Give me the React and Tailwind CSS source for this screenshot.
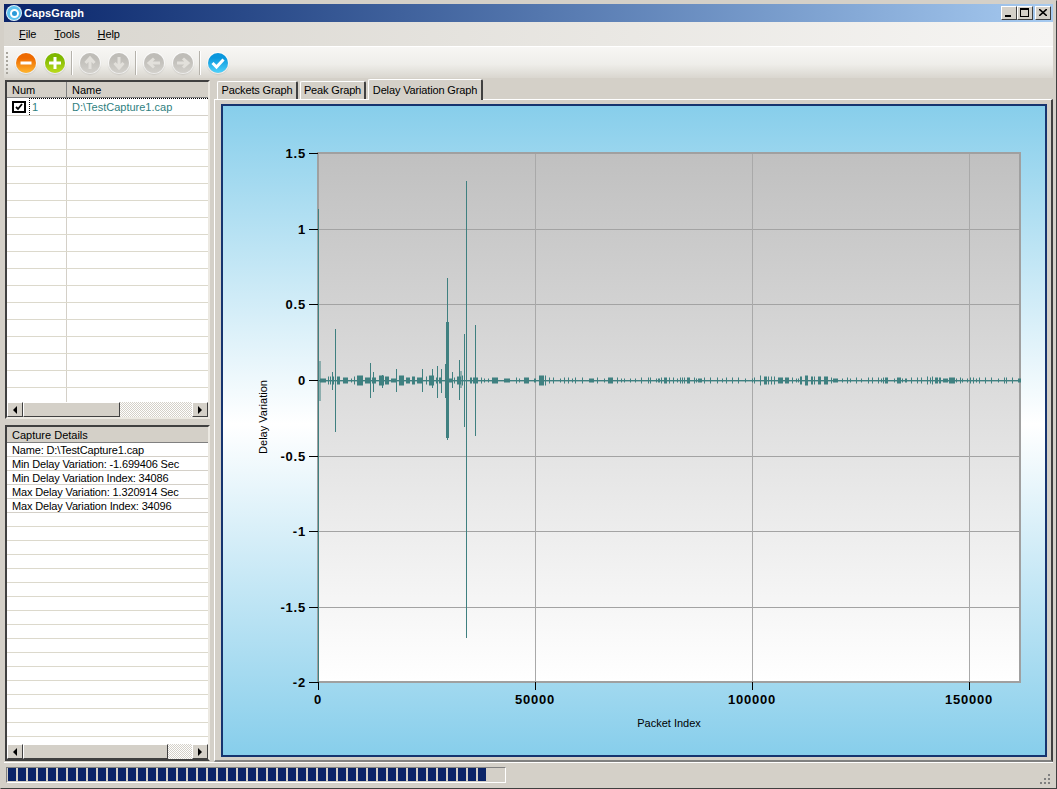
import { Fragment } from "react";

const font = "font-['Liberation_Sans',Arial,sans-serif]";

const yTicks = [
  ["1.5", 153],
  ["1", 229],
  ["0.5", 304],
  ["0", 380],
  ["-0.5", 456],
  ["-1", 531],
  ["-1.5", 607],
  ["-2", 682],
];
const xTicks = [
  ["0", 318],
  ["50000", 535],
  ["100000", 752],
  ["150000", 969],
];

// [x, top, bottom, width]
const spikes = [
  [320, 361, 401, 1],
  [318.5, 209, 682, 1],
  [332.5, 372, 390, 1],
  [335.5, 329, 432, 1],
  [370.5, 363, 398, 1],
  [373.5, 372, 392, 1],
  [382.5, 375, 388, 1],
  [396.5, 369, 392, 1],
  [422.5, 369, 392, 1],
  [432.5, 369, 388, 1],
  [437.5, 366, 398, 1],
  [441.5, 369, 393, 1],
  [445.5, 364, 398, 1],
  [447.5, 322, 438, 3],
  [447.5, 278, 440, 1],
  [452.5, 372, 388, 1],
  [459.5, 360, 400, 1],
  [461, 371, 388, 1],
  [464.5, 334, 427, 1],
  [466.5, 181, 638, 1],
  [475.5, 325, 436, 1],
];

// seeded so the noise stays put between runs
function noise() {
  let seed = 7;
  const rnd = () => {
    seed = (seed * 16807) % 2147483647;
    return seed / 2147483647;
  };
  const out = [];
  let x = 320;
  while (x < 1020) {
    const busy =
      (x > 320 && x < 480) || (x > 755 && x < 830) || (x > 530 && x < 546) || (x > 925 && x < 945);
    const w = rnd() < (busy ? 0.6 : 0.2) ? 2 + Math.floor(rnd() * 5) : 1;
    const h = busy ? 2 + Math.round(rnd() * 3) : 2 + Math.round(rnd());
    out.push([x, w, h]);
    x += w + 1 + Math.floor(rnd() * (busy ? 3 : 6));
  }
  return out;
}

function Chart() {
  return (
    <svg width="822" height="649" viewBox="223 106 822 649" className="block">
      <defs>
        <linearGradient id="panel" x1="0" y1="0" x2="0" y2="1">
          <stop offset="0" stopColor="#87ceeb" />
          <stop offset="0.49" stopColor="#ffffff" />
          <stop offset="1" stopColor="#87ceeb" />
        </linearGradient>
        <linearGradient id="plot" x1="0" y1="0" x2="0" y2="1">
          <stop offset="0" stopColor="#c0c0c0" />
          <stop offset="1" stopColor="#ffffff" />
        </linearGradient>
      </defs>
      <rect x="223" y="106" width="822" height="649" fill="url(#panel)" />
      <rect x="318" y="153" width="702" height="529" fill="url(#plot)" />
      {yTicks.slice(1, 7).map(([label, y]) => (
        <line key={label} x1="318" x2="1020" y1={y + 0.5} y2={y + 0.5} stroke="#a3a3a3" />
      ))}
      {xTicks.slice(1).map(([label, x]) => (
        <line key={label} x1={x + 0.5} x2={x + 0.5} y1="153" y2="682" stroke="#a9a9a9" />
      ))}
      <rect x="318" y="153" width="702" height="529" fill="none" stroke="#a0a0a0" strokeWidth="2" />
      {noise().map(([x, w, h], i) => (
        <rect key={i} x={x} y={380 - h + 0.5} width={w} height={h * 2} fill="#3f8080" />
      ))}
      <rect x="318" y="380" width="702" height="1.4" fill="#3f8080" />
      {spikes.map(([x, a, b, w], i) => (
        <line key={i} x1={x} x2={x} y1={a} y2={b} stroke="#3f8080" strokeWidth={w} />
      ))}
      {yTicks.map(([label, y]) => (
        <Fragment key={label}>
          <line x1="309" x2="318" y1={y + 0.5} y2={y + 0.5} stroke="#000" />
          <text
            x="306"
            y={y + 5}
            textAnchor="end"
            fontSize="13"
            fontWeight="700"
            letterSpacing="0.8"
            fill="#000"
            fontFamily="Liberation Sans"
          >
            {label}
          </text>
        </Fragment>
      ))}
      {xTicks.map(([label, x]) => (
        <Fragment key={label}>
          <line x1={x + 0.5} x2={x + 0.5} y1="682" y2="690" stroke="#000" />
          <text
            x={x}
            y="704"
            textAnchor="middle"
            fontSize="13"
            fontWeight="700"
            letterSpacing="0.8"
            fill="#000"
            fontFamily="Liberation Sans"
          >
            {label}
          </text>
        </Fragment>
      ))}
      <text x="669" y="727" textAnchor="middle" fontSize="11" fill="#000" fontFamily="Liberation Sans">
        Packet Index
      </text>
      <text
        x="267"
        y="417"
        textAnchor="middle"
        fontSize="11"
        fill="#000"
        fontFamily="Liberation Sans"
        transform="rotate(-90 267 417)"
      >
        Delay Variation
      </text>
    </svg>
  );
}

function ToolIcon({ from, to, disabled, kind }) {
  const shapes = {
    minus: <path d="M4.5 10h11" />,
    plus: <path d="M10 4v12M4 10h12" />,
    up: <path d="M10 16V6M5.5 10 10 5l4.5 5" />,
    down: <path d="M10 4v10M5.5 10l4.5 5 4.5-5" />,
    left: <path d="M16 10H6M10 5.5 5 10l5 4.5" />,
    right: <path d="M4 10h10M10 5.5l5 4.5-5 4.5" />,
    check: <path d="M4.5 10 8.5 14 15.5 6.5" />,
  };
  return (
    <span className="flex w-[29px] justify-center">
      <span
        className="flex h-[20px] w-[20px] items-center justify-center rounded-full shadow-[0_0_0_1px_rgba(255,255,255,0.75),0_1px_2px_rgba(0,0,0,0.3)]"
        style={{ background: `linear-gradient(${from} 25%, ${to})` }}
      >
        <svg
          width="20"
          height="20"
          viewBox="0 0 20 20"
          fill="none"
          stroke={disabled ? "#e2e0db" : "#fff"}
          strokeWidth="3"
        >
          {shapes[kind]}
        </svg>
      </span>
    </span>
  );
}

function Sep() {
  return <span className="mx-[2px] h-[24px] w-[2px] border-r border-white bg-[#b5b2ab]" />;
}

function Btn({ children }) {
  return (
    <div className="flex h-[15px] w-[16px] shrink-0 items-center justify-center border border-t-white border-l-white border-r-[#404040] border-b-[#404040] bg-[#d4d0c8]">
      {children}
    </div>
  );
}

function Scrollbar({ thumb }) {
  return (
    <div className="flex h-[15px] shrink-0 bg-[repeating-conic-gradient(#d4d0c8_0_25%,#ffffff_0_50%)] bg-[length:2px_2px]">
      <Btn>
        <span className="border-y-[4px] border-r-[4px] border-y-transparent border-r-black" />
      </Btn>
      <div
        className="h-[15px] border border-t-white border-l-white border-r-[#404040] border-b-[#404040] bg-[#d4d0c8]"
        style={{ width: thumb }}
      />
      <div className="flex-1" />
      <Btn>
        <span className="border-y-[4px] border-l-[4px] border-y-transparent border-l-black" />
      </Btn>
    </div>
  );
}

function WinBtn({ children, className = "" }) {
  return (
    <div
      className={`relative h-[14px] w-[16px] border border-t-white border-l-white border-r-[#404040] border-b-[#404040] bg-[#d4d0c8] ${className}`}
    >
      {children}
    </div>
  );
}

function HeadCell({ children, className = "" }) {
  return (
    <div
      className={`flex h-[16px] items-center border-r border-r-[#808080] border-b border-b-[#808080] pl-[5px] pt-[1px] text-[11px] leading-none text-black ${className}`}
    >
      {children}
    </div>
  );
}

function Tab({ children, className = "" }) {
  return (
    <div
      className={`flex shrink-0 items-center justify-center rounded-t-[2px] border-t border-l border-t-white border-l-white border-r-2 border-r-[#404040] text-[11px] tracking-[-0.15px] text-black ${className}`}
    >
      {children}
    </div>
  );
}

const details = [
  "Name: D:\\TestCapture1.cap",
  "Min Delay Variation: -1.699406 Sec",
  "Min Delay Variation Index: 34086",
  "Max Delay Variation: 1.320914 Sec",
  "Max Delay Variation Index: 34096",
];

export default function App() {
  const topRows = Array.from({ length: 18 });
  const detailRows = Array.from({ length: 21 });
  const blocks = Array.from({ length: 48 });

  return (
    <div
      className={`flex h-[789px] w-[1057px] flex-col overflow-hidden border border-[#404040] border-t-[#d4d0c8] border-l-[#d4d0c8] bg-[#d4d0c8] px-[3px] pt-[3px] pb-[2px] ${font}`}
    >
      {/* title bar */}
      <div className="flex h-[18px] shrink-0 items-center bg-gradient-to-r from-[#0a246a] to-[#a6caf0] pr-[2px] pl-[3px]">
        <span className="flex h-[14px] w-[14px] items-center justify-center rounded-full bg-[#5fc3ee] ring-1 ring-[#dff4fc]">
          <span className="h-[9px] w-[9px] rounded-full border-2 border-white bg-[#2a9ad8]" />
        </span>
        <span className="ml-[3px] text-[11px] font-bold tracking-[0.1px] text-white">CapsGraph</span>
        <div className="ml-auto flex">
          <WinBtn>
            <span className="absolute bottom-[2px] left-[3px] h-[2px] w-[6px] bg-black" />
          </WinBtn>
          <WinBtn>
            <span className="absolute top-[1px] left-[2px] h-[9px] w-[9px] border border-t-2 border-black" />
          </WinBtn>
          <WinBtn className="ml-[2px]">
            <svg className="absolute top-[2px] left-[3px]" width="8" height="7" viewBox="0 0 8 7" stroke="#000" strokeWidth="1.6">
              <path d="M0 0l8 7M8 0 0 7" />
            </svg>
          </WinBtn>
        </div>
      </div>

      {/* menu */}
      <div className="flex h-[24px] shrink-0 items-center gap-[18px] bg-gradient-to-r from-[#d8d5ce] to-[#f6f5f3] pl-[15px] text-[11px] tracking-[-0.1px] text-black">
        <span><u>F</u>ile</span>
        <span><u>T</u>ools</span>
        <span><u>H</u>elp</span>
      </div>

      {/* toolbar */}
      <div className="flex h-[32px] shrink-0 items-center border-t border-white bg-[linear-gradient(#f7f6f4,#efeeea_55%,#d9d6cf)] pl-[2px]">
        <span className="mr-[3px] h-[22px] w-[2px] bg-[repeating-linear-gradient(#a8a59d_0_2px,transparent_2px_4px)]" />
        <ToolIcon kind="minus" from="#ee6a00" to="#ffb52e" />
        <ToolIcon kind="plus" from="#7fb800" to="#bcdc1e" />
        <Sep />
        <ToolIcon kind="up" from="#bfbdb8" to="#d2d0cb" disabled />
        <ToolIcon kind="down" from="#bfbdb8" to="#d2d0cb" disabled />
        <Sep />
        <ToolIcon kind="left" from="#bfbdb8" to="#d2d0cb" disabled />
        <ToolIcon kind="right" from="#bfbdb8" to="#d2d0cb" disabled />
        <Sep />
        <ToolIcon kind="check" from="#0a97dd" to="#4fd2fb" />
      </div>

      {/* body */}
      <div className="flex min-h-0 flex-1 pt-[2px]">
        <div className="flex w-[206px] shrink-0 flex-col pl-[1px]">
          {/* capture list */}
          <div className="flex h-[339px] flex-col border-2 border-t-[#404040] border-r-[#ece9e2] border-b-[#ece9e2] border-l-[#404040] bg-white">
            <div className="flex shrink-0 bg-[#d4d0c8]">
              <HeadCell className="w-[60px]">Num</HeadCell>
              <HeadCell className="flex-1 border-r-0">Name</HeadCell>
            </div>
            <div className="relative min-h-0 flex-1 overflow-hidden">
              <div className="flex h-[18px] border-b border-[#d4d0c8] text-[11px] text-[#2f7f7f]">
                <div className="flex w-[60px] items-center border-r border-[#d4d0c8] pl-[5px]">
                  <span className="flex h-[12px] w-[14px] items-center justify-center border-2 border-black">
                    <svg width="8" height="8" viewBox="0 0 8 8" fill="none" stroke="#000" strokeWidth="1.8">
                      <path d="M1 4l2 2 4-5" />
                    </svg>
                  </span>
                  <span className="ml-[3px] h-full flex-1 border-t border-l border-dotted border-black pl-[2px] leading-[17px]">1</span>
                </div>
                <div className="flex-1 border-t border-dotted border-black pl-[5px] leading-[16px]">D:\TestCapture1.cap</div>
              </div>
              {topRows.map((_, i) => (
                <div key={i} className="flex h-[17px] border-b border-[#dcd9cc]">
                  <div className="w-[60px] border-r border-[#d4d0c8]" />
                </div>
              ))}
            </div>
            <Scrollbar thumb="97px" />
          </div>

          {/* details */}
          <div className="mt-[6px] flex h-[336px] flex-col border-2 border-t-[#404040] border-r-[#ece9e2] border-b-[#404040] border-l-[#404040] bg-white">
            <HeadCell className="shrink-0 border-r-0 bg-[#d4d0c8]">Capture Details</HeadCell>
            <div className="min-h-0 flex-1 overflow-hidden">
              {details.map((line) => (
                <div
                  key={line}
                  className="h-[14px] border-b border-[#d4d0c8] pl-[5px] text-[11px] leading-[14px] tracking-[-0.15px] text-black"
                >
                  {line}
                </div>
              ))}
              {detailRows.map((_, i) => (
                <div key={i} className="h-[14px] border-b border-[#dcd9cc]" />
              ))}
            </div>
            <Scrollbar thumb="145px" />
          </div>
        </div>

        {/* graph tabs */}
        <div className="ml-[4px] flex min-w-0 flex-1 flex-col">
          <div className="flex h-[19px] shrink-0 items-end gap-[2px] pl-[3px]">
            <Tab className="h-[18px] w-[81px]">Packets Graph</Tab>
            <Tab className="h-[18px] w-[66px]">Peak Graph</Tab>
            <Tab className="relative z-10 -mb-[1px] h-[21px] w-[115px] bg-[#d4d0c8]">Delay Variation Graph</Tab>
          </div>
          <div className="flex h-[664px] items-start border border-r-2 border-b-2 border-t-white border-r-[#404040] border-b-[#808080] border-l-white bg-[#d4d0c8] pt-[4px] pl-[6px]">
            <div className="border-2 border-[#16346f]">
              <Chart />
            </div>
          </div>
        </div>
      </div>

      {/* status bar */}
      <div className="flex h-[24px] shrink-0 items-center border-t border-white pl-[2px]">
        <div className="flex h-[16px] w-[500px] items-center gap-[2px] border border-t-[#808080] border-r-white border-b-white border-l-[#808080] pl-[1px]">
          {blocks.map((_, i) => (
            <span key={i} className="h-[13px] w-[8px] bg-[#0a2468]" />
          ))}
        </div>
        <svg className="mt-[8px] mr-[2px] ml-auto" width="12" height="12" viewBox="0 0 12 12" fill="#808080">
          <path d="M9 1h2v2H9zM5 5h2v2H5zM9 5h2v2H9zM1 9h2v2H1zM5 9h2v2H5zM9 9h2v2H9z" />
        </svg>
      </div>
    </div>
  );
}
